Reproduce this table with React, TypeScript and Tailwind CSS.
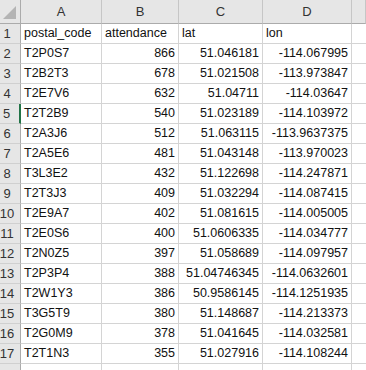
const rows: [string, string, string, string][] = [
  ["postal_code", "attendance", "lat", "lon"],
  ["T2P0S7", "866", "51.046181", "-114.067995"],
  ["T2B2T3", "678", "51.021508", "-113.973847"],
  ["T2E7V6", "632", "51.04711", "-114.03647"],
  ["T2T2B9", "540", "51.023189", "-114.103972"],
  ["T2A3J6", "512", "51.063115", "-113.9637375"],
  ["T2A5E6", "481", "51.043148", "-113.970023"],
  ["T3L3E2", "432", "51.122698", "-114.247871"],
  ["T2T3J3", "409", "51.032294", "-114.087415"],
  ["T2E9A7", "402", "51.081615", "-114.005005"],
  ["T2E0S6", "400", "51.0606335", "-114.034777"],
  ["T2N0Z5", "397", "51.058689", "-114.097957"],
  ["T2P3P4", "388", "51.04746345", "-114.0632601"],
  ["T2W1Y3", "386", "50.9586145", "-114.1251935"],
  ["T3G5T9", "380", "51.148687", "-114.213373"],
  ["T2G0M9", "378", "51.041645", "-114.032581"],
  ["T2T1N3", "355", "51.027916", "-114.108244"],
];

const cell = "h-[20px] border-r border-b border-[#d4d4d4] px-[3px] flex items-center whitespace-nowrap overflow-visible";

export default function App() {
  return (
    <div
      className="w-[366px] h-[370px] overflow-hidden bg-white text-[12.5px] text-[#111]"
      style={{ fontFamily: '"Liberation Sans", Arial, sans-serif' }}
    >
      <div className="grid grid-cols-[21px_81px_77px_84px_89px_1fr]">
        {/* column headers */}
        <div className="h-[24px] bg-[#e6e6e6] border-r border-b border-[#ababab] flex items-end justify-end">
          <svg width="14" height="14" viewBox="0 0 14 14" className="mb-[3px] mr-[3px]">
            <polygon points="13,0 13,13 0,13" fill="#b4b4b4" />
          </svg>
        </div>
        {["A", "B", "C", "D", ""].map((h, i) => (
          <div
            key={i}
            className="h-[24px] bg-[#e6e6e6] border-r border-b border-r-[#c6c6c6] border-b-[#ababab] flex items-center justify-center text-[13px] text-[#333]"
          >
            {h}
          </div>
        ))}

        {rows.map((r, i) => (
          <Row key={i} n={i + 1} r={r} />
        ))}

        <div className="h-[20px] bg-[#e6e6e6] border-r border-[#ababab]" />
        <div className="h-[20px] border-r border-[#d4d4d4]" />
        <div className="h-[20px] border-r border-[#d4d4d4]" />
        <div className="h-[20px] border-r border-[#d4d4d4]" />
        <div className="h-[20px] border-r border-[#d4d4d4]" />
        <div className="h-[20px]" />
      </div>
    </div>
  );
}

function Row({ n, r }: { n: number; r: [string, string, string, string] }) {
  const header = n === 1;
  return (
    <>
      <div
        className={`h-[20px] bg-[#e6e6e6] border-b border-b-[#d0d0d0] flex items-center justify-center pr-[6px] text-[13px] text-[#333] ${
          n === 5 ? "border-r-2 border-r-[#217346]" : "border-r border-r-[#ababab]"
        }`}
      >
        {n}
      </div>
      <div className={cell}>{r[0]}</div>
      <div className={`${cell} ${header ? "" : "justify-end"}`}>{r[1]}</div>
      <div className={`${cell} ${header ? "" : "justify-end"}`}>{r[2]}</div>
      <div className={`${cell} ${header ? "" : "justify-end"}`}>{r[3]}</div>
      <div className="h-[20px] border-b border-[#d4d4d4]" />
    </>
  );
}
